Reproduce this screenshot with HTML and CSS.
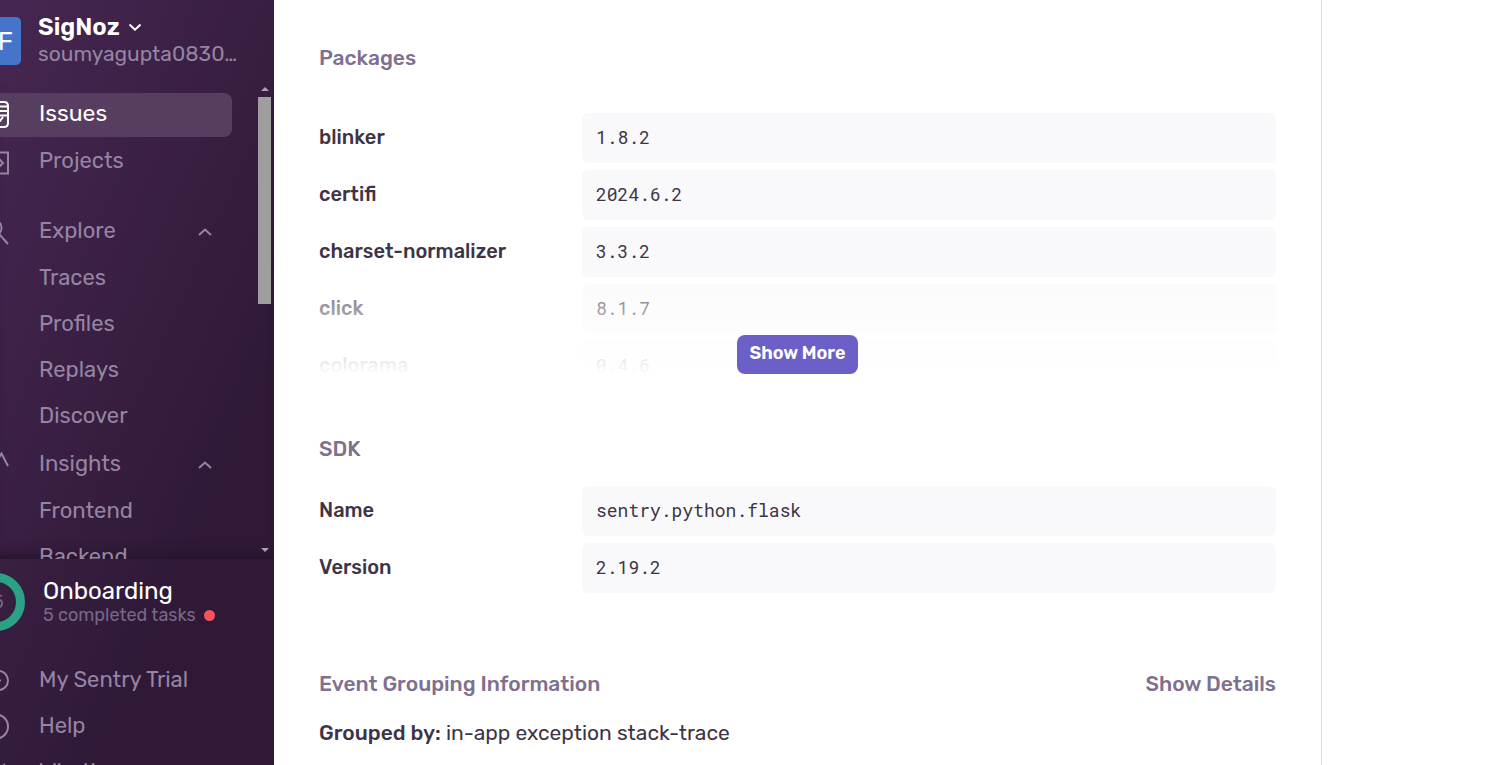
FILE: index.html
```html
<!DOCTYPE html>
<html lang="en">
<head>
<meta charset="utf-8">
<title>Issues - SigNoz</title>
<link rel="stylesheet" href="styles.css">
</head>
<body>
<div class="app">
  <aside class="sidebar">
    <header class="org">
      <span class="org-avatar">F</span>
      <div class="org-text">
        <button class="org-name" type="button">SigNoz
          <svg class="chevron-down" viewBox="0 0 14 8" aria-hidden="true"><path d="M1.5 1.500 7 6.700 12.500 1.500"/></svg>
        </button>
        <div class="org-user">soumyagupta0830…</div>
      </div>
    </header>
    <div class="nav-scroll">
      <nav class="nav">
        <a class="item active" href="#">
          <svg class="icon" viewBox="0 0 10 32" aria-hidden="true"><path d="M-8 5H4Q8 5 8 9V26Q8 30 4 30H-8M-8 9.500H8M-8 14H8M-8 18.500H8M-8 24H0L3 20"/></svg>
          <span>Issues</span></a>
        <a class="item" href="#">
          <svg class="icon" viewBox="0 0 10 32" aria-hidden="true"><path d="M-8 8.500H8V29.500H-8M-2 14 3 19-2 24"/></svg>
          <span>Projects</span></a>
        <div class="group first">
          <button class="item" type="button">
            <svg class="icon" viewBox="0 0 10 32" aria-hidden="true"><circle cx="-7" cy="14" r="8.500"/><path d="M-1 20 8 30"/></svg>
            <span>Explore</span>
            <svg class="chevron-up" viewBox="0 0 14 8" aria-hidden="true"><path d="M1 7 7 1.500 13 7"/></svg>
          </button>
          <div class="sub">
            <a class="item" href="#"><span class="icon"></span><span>Traces</span></a>
            <a class="item" href="#"><span class="icon"></span><span>Profiles</span></a>
            <a class="item" href="#"><span class="icon"></span><span>Replays</span></a>
            <a class="item" href="#"><span class="icon"></span><span>Discover</span></a>
          </div>
        </div>
        <div class="group">
          <button class="item" type="button">
            <svg class="icon" viewBox="0 0 10 32" aria-hidden="true"><path d="M-4 16 1.500 6.500 8 19"/></svg>
            <span>Insights</span>
            <svg class="chevron-up" viewBox="0 0 14 8" aria-hidden="true"><path d="M1 7 7 1.500 13 7"/></svg>
          </button>
          <div class="sub">
            <a class="item" href="#"><span class="icon"></span><span>Frontend</span></a>
            <a class="item" href="#"><span class="icon"></span><span>Backend</span></a>
          </div>
        </div>
      </nav>
      <div class="scrollbar" aria-hidden="true">
        <span class="arrow-up"></span>
        <span class="track"><span class="thumb"></span></span>
        <span class="arrow-down"></span>
      </div>
    </div>
    <footer class="footer">
      <a class="onboarding" href="#">
        <svg class="ring" viewBox="0 0 26 58" aria-hidden="true"><circle cx="-4" cy="29" r="24.500"/><text x="-7" y="35">5</text></svg>
        <span class="onboarding-text">
          <span class="onboarding-title">Onboarding</span>
          <span class="onboarding-status">5 completed tasks <i class="dot"></i></span>
        </span>
      </a>
      <a class="item" href="#">
        <svg class="icon" viewBox="0 0 10 32" aria-hidden="true"><circle cx="-1.500" cy="17.500" r="9.500"/><path d="M-2 17.500H1"/></svg>
        <span>My Sentry Trial</span></a>
      <a class="item" href="#">
        <svg class="icon" viewBox="0 0 10 32" aria-hidden="true"><circle cx="-4" cy="17.500" r="12"/></svg>
        <span>Help</span></a>
      <a class="item" href="#">
        <svg class="icon" viewBox="0 0 10 32" aria-hidden="true"><path d="M-4 16 4 10V25L-4 20"/></svg>
        <span>What's new</span></a>
    </footer>
  </aside>

  <main class="content">
    <section class="packages">
      <h2 class="title">Packages</h2>
      <div class="clip">
        <dl class="rows">
          <dt>blinker</dt><dd>1.8.2</dd>
          <dt>certifi</dt><dd>2024.6.2</dd>
          <dt>charset-normalizer</dt><dd>3.3.2</dd>
          <dt>click</dt><dd>8.1.7</dd>
          <dt>colorama</dt><dd>0.4.6</dd>
        </dl>
        <div class="fade"><button class="show-more" type="button">Show More</button></div>
      </div>
    </section>
    <section class="sdk">
      <h2 class="title">SDK</h2>
      <dl class="rows">
        <dt>Name</dt><dd>sentry.python.flask</dd>
        <dt>Version</dt><dd>2.19.2</dd>
      </dl>
    </section>
    <section class="grouping">
      <div class="grouping-head">
        <h2 class="title">Event Grouping Information</h2>
        <button class="title details" type="button">Show Details</button>
      </div>
      <p class="grouped"><b>Grouped by:</b> in-app exception stack-trace</p>
    </section>
  </main>
</div>
</body>
</html>
```
FILE: styles.css
```css
* { box-sizing: border-box; }
body {
  margin: 0;
  background: #fff;
  color: #3e3446;
  font-family: Rubik, Roboto, sans-serif;
  font-size: 21px;
}
button { padding: 0; border: 0; background: none; color: inherit; font: inherit; text-align: left; cursor: pointer; }
a { color: inherit; text-decoration: none; }
.app {
  display: grid;
  grid-template-columns: 274px minmax(0, 1fr) 181px;
  height: 100vh;
  overflow: hidden;
}

/* Sidebar */
.sidebar {
  display: flex;
  flex-direction: column;
  min-height: 0;
  overflow: hidden;
  color: #9585a3;
  background: linear-gradient(294deg, #2f1937 28%, #452650 96%);
  font-size: 22px;
}
.org { display: flex; gap: 17px; height: 83px; flex: none; padding-top: 14px; }
.org-avatar {
  display: flex;
  justify-content: flex-end;
  align-items: center;
  width: 21px;
  height: 48px;
  margin-top: 3px;
  padding-right: 8px;
  border-radius: 0 5px 5px 0;
  background: #4674ca;
  color: #fff;
  font-size: 26px;
}
.org-text { line-height: 27px; }
.org-name { display: flex; align-items: center; gap: 8px; color: #fff; font-size: 24px; font-weight: 600; line-height: 26px; }
.org-user { font-size: 21px; }
.chevron-down, .chevron-up { width: 14px; height: 8px; fill: none; stroke: currentColor; stroke-width: 2; }
.nav-scroll {
  display: flex;
  flex: none;
  height: 476px;
  overflow: hidden;
  box-shadow: inset 0 -14px 14px -10px #25132c;
}
.nav { flex: 1; padding-top: 10px; }
.item {
  display: flex;
  align-items: center;
  width: 232px;
  height: 44px;
  margin-bottom: 2px;
  padding: 0 20px 4px 0;
  border-radius: 0 8px 8px 0;
}
.active { margin-bottom: 3px; color: #fff; background: #573d5f; font-size: 23px; }
.icon { width: 10px; height: 32px; margin-right: 29px; flex: none; fill: none; stroke: currentColor; stroke-width: 2; }
.group.first { margin-top: 26px; }
.group .chevron-up { margin-left: auto; margin-top: 3px; }
.sub { padding: 1px 0 2px; }
.scrollbar { display: flex; flex-direction: column; align-items: center; width: 13px; margin-right: 3px; padding: 4px 0 7px; }
.arrow-up, .arrow-down { border: 4px solid transparent; }
.arrow-up { border-top: 0; border-bottom-color: #aaa0af; }
.arrow-down { border-bottom: 0; border-top-color: #aaa0af; }
.track { flex: 1; width: 100%; padding-top: 6px; }
.thumb { display: block; height: 46%; background: #9e9e9e; }
.footer { flex: 1; min-height: 0; padding-top: 14px; overflow: hidden; }
.onboarding { display: flex; gap: 17px; height: 86px; }
.ring { width: 26px; height: 58px; flex: none; fill: none; stroke: #2ba185; stroke-width: 9; }
.ring text { fill: #79678a; stroke: none; font-size: 18px; }
.onboarding-text { display: flex; flex-direction: column; padding-top: 5px; }
.onboarding-title { color: #fff; font-size: 24px; line-height: 27px; }
.onboarding-status { display: flex; align-items: center; gap: 8px; font-size: 18px; line-height: 21px; color: #79678a; }
.dot { width: 11px; height: 11px; border-radius: 50%; background: #f55459; }

/* Event details */
.content { padding: 44px 45px 0; border-right: 1px solid #e0dce5; overflow: hidden; }
.title { margin: 0; color: #80708f; font-size: 21px; line-height: 28px; font-weight: 500; }
.clip { position: relative; height: 262px; margin-top: 41px; overflow: hidden; }
.rows { display: grid; grid-template-columns: 256px minmax(0, 1fr); gap: 7px; margin: 0; }
.rows dt { padding-top: 10px; font-size: 20px; line-height: 28px; font-weight: 500; }
.rows dd {
  margin: 0;
  padding: 10px 14px 12px;
  border-radius: 6px;
  background: #f9f9fb;
  font-family: "Roboto Mono", "Liberation Mono", monospace;
  font-size: 18px;
  line-height: 28px;
}
.fade {
  position: absolute;
  inset: auto 0 0;
  display: flex;
  justify-content: center;
  align-items: flex-end;
  height: 92px;
  padding-bottom: 1px;
  background: linear-gradient(rgba(255, 255, 255, .3), #fff);
}
.show-more {
  height: 39px;
  padding: 0 12px 3px;
  border-radius: 8px;
  background: #6c5fc7;
  color: #fff;
  font-size: 18px;
  font-weight: 600;
}
.sdk { margin-top: 60px; }
.sdk .rows { margin-top: 23px; }
.grouping { margin-top: 77px; }
.grouping-head { display: flex; justify-content: space-between; }
.grouped { margin: 21px 0 0; font-size: 21px; line-height: 28px; }
.grouped b { font-weight: 500; }
```
